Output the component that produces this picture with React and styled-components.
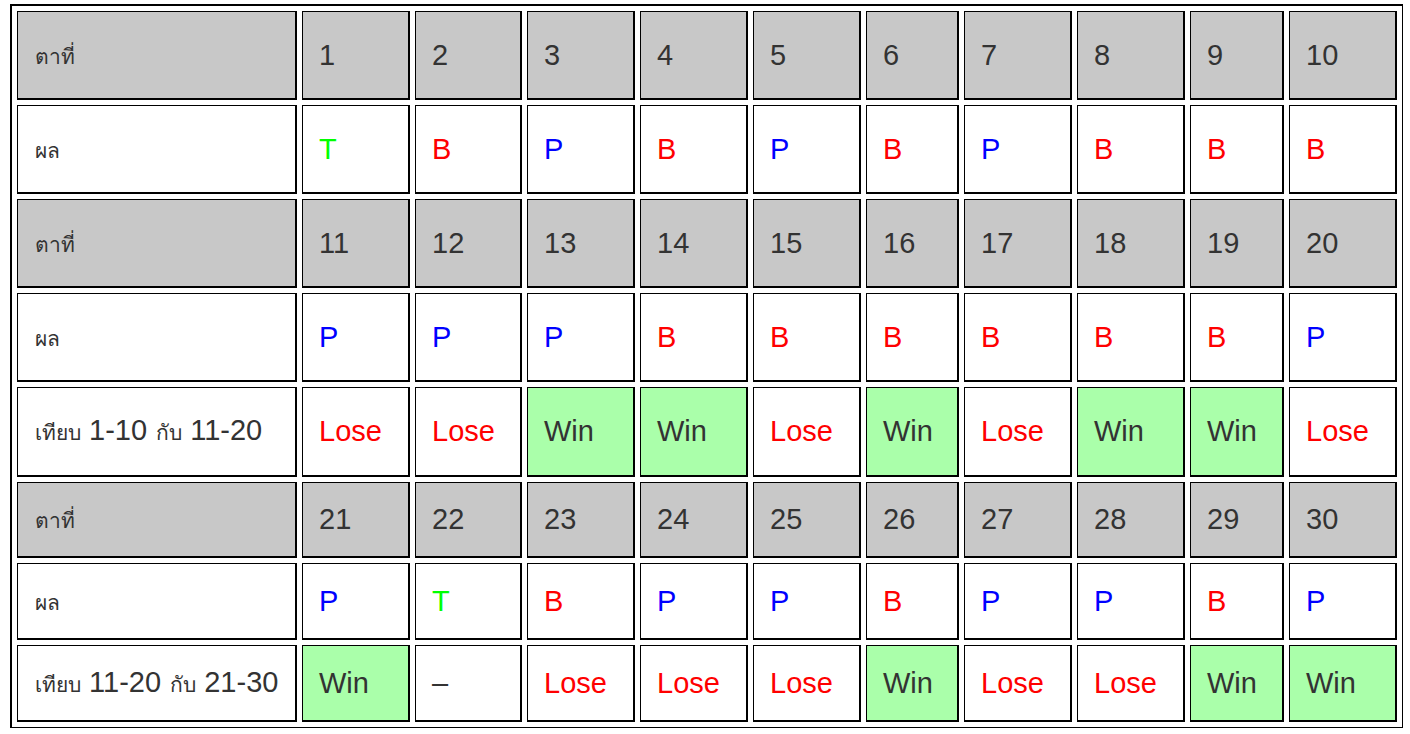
import React from 'react';
import styled, { createGlobalStyle } from 'styled-components';

const GlobalStyle = createGlobalStyle`
    body {
        margin: 0;
        background: #fff;
        font-family: "Liberation Sans", Arial, sans-serif;
    }
`;

const Table = styled.table`
    margin: 4px 0 0 10px;
    border-collapse: separate;
    border-spacing: 5px;
    table-layout: fixed;
    border-style: solid;
    border-color: #000;
    border-width: 2px 1px 1px 2px;
    font-family: "Liberation Sans", Arial, sans-serif;
    font-size: 29px;
    color: #333;
`;

const Row = styled.tr`
    height: ${p => p.$h}px;
`;

const Cell = styled.td`
    box-sizing: border-box;
    width: ${p => p.$w}px;
    padding: 0 0 0 16px;
    border-style: solid;
    border-color: #000;
    border-width: 1px 2px 2px 1px;
    vertical-align: middle;
    white-space: nowrap;
    background: ${p => (p.$head ? '#c8c8c8' : p.$win ? '#aaffaa' : '#fff')};
    color: ${p => p.$color || '#333'};
`;

const Label = styled.span`
    font-size: 21px;
    padding-left: 1px;
`;

const widths = [280, 108, 107, 108, 108, 108, 93, 108, 108, 94, 108];

const COLORS = { T: '#00ff00', B: '#ff0000', P: '#0000ff' };

const rows = [
    { kind: 'head', label: 'ตาที่', cells: ['1', '2', '3', '4', '5', '6', '7', '8', '9', '10'], h: 89 },
    { kind: 'res', label: 'ผล', cells: 'TBPBPBPBBB'.split(''), h: 89 },
    { kind: 'head', label: 'ตาที่', cells: ['11', '12', '13', '14', '15', '16', '17', '18', '19', '20'], h: 89 },
    { kind: 'res', label: 'ผล', cells: 'PPPBBBBBBP'.split(''), h: 89 },
    {
        kind: 'cmp', label: ['เทียบ', '1-10', 'กับ', '11-20'],
        cells: ['Lose', 'Lose', 'Win', 'Win', 'Lose', 'Win', 'Lose', 'Win', 'Win', 'Lose'], h: 90,
    },
    { kind: 'head', label: 'ตาที่', cells: ['21', '22', '23', '24', '25', '26', '27', '28', '29', '30'], h: 76 },
    { kind: 'res', label: 'ผล', cells: 'PTBPPBPPBP'.split(''), h: 77 },
    {
        kind: 'cmp', label: ['เทียบ', '11-20', 'กับ', '21-30'],
        cells: ['Win', '–', 'Lose', 'Lose', 'Lose', 'Win', 'Lose', 'Lose', 'Win', 'Win'], h: 77,
    },
];

const renderLabel = row => {
    if (row.kind !== 'cmp') return <Label>{row.label}</Label>;
    const [a, b, c, d] = row.label;
    return (
        <>
            <Label>{a}</Label> {b} <Label>{c}</Label> {d}
        </>
    );
};

const App = () => (
    <>
        <GlobalStyle />
        <Table>
            <tbody>
                {rows.map((row, r) => (
                    <Row key={r} $h={row.h}>
                        <Cell $w={widths[0]} $head={row.kind === 'head'}>{renderLabel(row)}</Cell>
                        {row.cells.map((v, i) => {
                            let color;
                            if (row.kind === 'res') color = COLORS[v];
                            if (row.kind === 'cmp' && v === 'Lose') color = '#ff0000';
                            return (
                                <Cell
                                    key={i}
                                    $w={widths[i + 1]}
                                    $head={row.kind === 'head'}
                                    $win={v === 'Win'}
                                    $color={color}
                                >
                                    {v}
                                </Cell>
                            );
                        })}
                    </Row>
                ))}
            </tbody>
        </Table>
    </>
);

export default App;
